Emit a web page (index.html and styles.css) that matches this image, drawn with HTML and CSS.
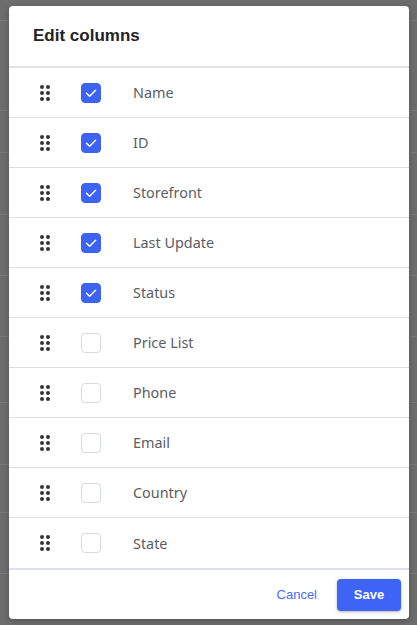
FILE: index.html
```html
<!DOCTYPE html>
<html>
<head>
<meta charset="utf-8">
<link rel="stylesheet" href="styles.css">
</head>
<body>
<div class="backdrop">
  <div class="bg-line l1"></div>
  <div class="bg-line l2"></div>
  <div class="bg-line l3"></div>
  <div class="bg-line l4"></div>
  <div class="bg-line l5"></div>
  <div class="bg-line l6"></div>
  <div class="bg-line l7"></div>
  <div class="bg-line l8"></div>
  <div class="bg-line l9"></div>
  <div class="bg-line l10"></div>
</div>
<div class="modal">
  <div class="modal-header">Edit columns</div>
  <div class="rows">
    <div class="row"><span class="handle"><i></i><i></i><i></i><i></i><i></i><i></i></span><span class="cb on"><svg viewBox="0 0 20 20"><path d="M5.5 10.3 L8.6 13.3 L14.6 7.2"/></svg></span><span class="label">Name</span></div>
    <div class="row"><span class="handle"><i></i><i></i><i></i><i></i><i></i><i></i></span><span class="cb on"><svg viewBox="0 0 20 20"><path d="M5.5 10.3 L8.6 13.3 L14.6 7.2"/></svg></span><span class="label">ID</span></div>
    <div class="row"><span class="handle"><i></i><i></i><i></i><i></i><i></i><i></i></span><span class="cb on"><svg viewBox="0 0 20 20"><path d="M5.5 10.3 L8.6 13.3 L14.6 7.2"/></svg></span><span class="label">Storefront</span></div>
    <div class="row"><span class="handle"><i></i><i></i><i></i><i></i><i></i><i></i></span><span class="cb on"><svg viewBox="0 0 20 20"><path d="M5.5 10.3 L8.6 13.3 L14.6 7.2"/></svg></span><span class="label">Last Update</span></div>
    <div class="row"><span class="handle"><i></i><i></i><i></i><i></i><i></i><i></i></span><span class="cb on"><svg viewBox="0 0 20 20"><path d="M5.5 10.3 L8.6 13.3 L14.6 7.2"/></svg></span><span class="label">Status</span></div>
    <div class="row"><span class="handle"><i></i><i></i><i></i><i></i><i></i><i></i></span><span class="cb"></span><span class="label">Price List</span></div>
    <div class="row"><span class="handle"><i></i><i></i><i></i><i></i><i></i><i></i></span><span class="cb"></span><span class="label">Phone</span></div>
    <div class="row"><span class="handle"><i></i><i></i><i></i><i></i><i></i><i></i></span><span class="cb"></span><span class="label">Email</span></div>
    <div class="row"><span class="handle"><i></i><i></i><i></i><i></i><i></i><i></i></span><span class="cb"></span><span class="label">Country</span></div>
    <div class="row last"><span class="handle"><i></i><i></i><i></i><i></i><i></i><i></i></span><span class="cb"></span><span class="label">State</span></div>
  </div>
  <div class="modal-footer">
    <button class="btn-cancel">Cancel</button>
    <button class="btn-save">Save</button>
  </div>
</div>
</body>
</html>
```
FILE: styles.css
```css
html, body {
  margin: 0;
  padding: 0;
  width: 417px;
  height: 625px;
  overflow: hidden;
  background: #6d6d6d;
}

.backdrop {
  position: relative;
  width: 417px;
  height: 625px;
}

.bg-line {
  position: absolute;
  left: 0;
  right: 0;
  height: 1px;
  background: #7a7a80;
}
.l1 { top: 20px; }
.l2 { top: 110px; }
.l3 { top: 152px; }
.l4 { top: 214px; }
.l5 { top: 275px; }
.l6 { top: 336px; }
.l7 { top: 402px; }
.l8 { top: 464px; }
.l9 { top: 512px; }
.l10 { top: 573px; }

.modal {
  position: absolute;
  left: 9px;
  top: 6px;
  width: 400px;
  height: 613px;
  background: #ffffff;
  border-radius: 4px;
  box-shadow: 0 2px 6px rgba(0, 0, 0, 0.25);
  display: flex;
  flex-direction: column;
  overflow: hidden;
}

.modal-header {
  height: 60px;
  display: flex;
  align-items: center;
  padding-left: 24px;
  font-family: "Liberation Sans", Arial, sans-serif;
  font-weight: bold;
  font-size: 17px;
  color: #222326;
  border-bottom: 2px solid #e0e0e6;
}

.rows {
  display: flex;
  flex-direction: column;
}

.row {
  height: 49px;
  border-bottom: 1px solid #dcdde8;
  display: flex;
  align-items: center;
  padding-left: 31px;
}
.row.last {
  border-bottom: none;
  height: 50px;
}

.handle {
  width: 10px;
  display: grid;
  grid-template-columns: 4px 4px;
  grid-auto-rows: 4px;
  column-gap: 2px;
  row-gap: 2px;
}
.handle i {
  display: block;
  width: 4px;
  height: 4px;
  border-radius: 50%;
  background: #33343a;
}

.cb {
  margin-left: 31px;
  width: 20px;
  height: 20px;
  box-sizing: border-box;
  border: 1px solid #d6d9e6;
  border-radius: 4px;
  background: #fff;
  display: flex;
}
.cb.on {
  background: #3d63f5;
  border-color: #3d63f5;
}
.cb svg {
  width: 20px;
  height: 20px;
  margin: -1px;
}
.cb svg path {
  fill: none;
  stroke: #ffffff;
  stroke-width: 1.5;
  stroke-linecap: round;
  stroke-linejoin: round;
}

.label {
  margin-left: 32px;
  font-family: "Noto Sans", sans-serif;
  font-size: 14.4px;
  color: #5a5d63;
}

.modal-footer {
  flex: 1;
  border-top: 2px solid #dde0ea;
  display: flex;
  align-items: center;
  justify-content: flex-end;
  padding-right: 8px;
  gap: 20px;
}

.btn-cancel {
  border: none;
  background: none;
  padding: 0;
  font-family: "Liberation Sans", Arial, sans-serif;
  font-size: 13px;
  color: #4a6cf2;
}

.btn-save {
  border: none;
  height: 32px;
  width: 64px;
  border-radius: 4px;
  background: #3e64f5;
  color: #ffffff;
  font-family: "Liberation Sans", Arial, sans-serif;
  font-weight: bold;
  font-size: 13px;
  box-shadow: 0 1px 3px rgba(0, 0, 0, 0.3);
}
```
